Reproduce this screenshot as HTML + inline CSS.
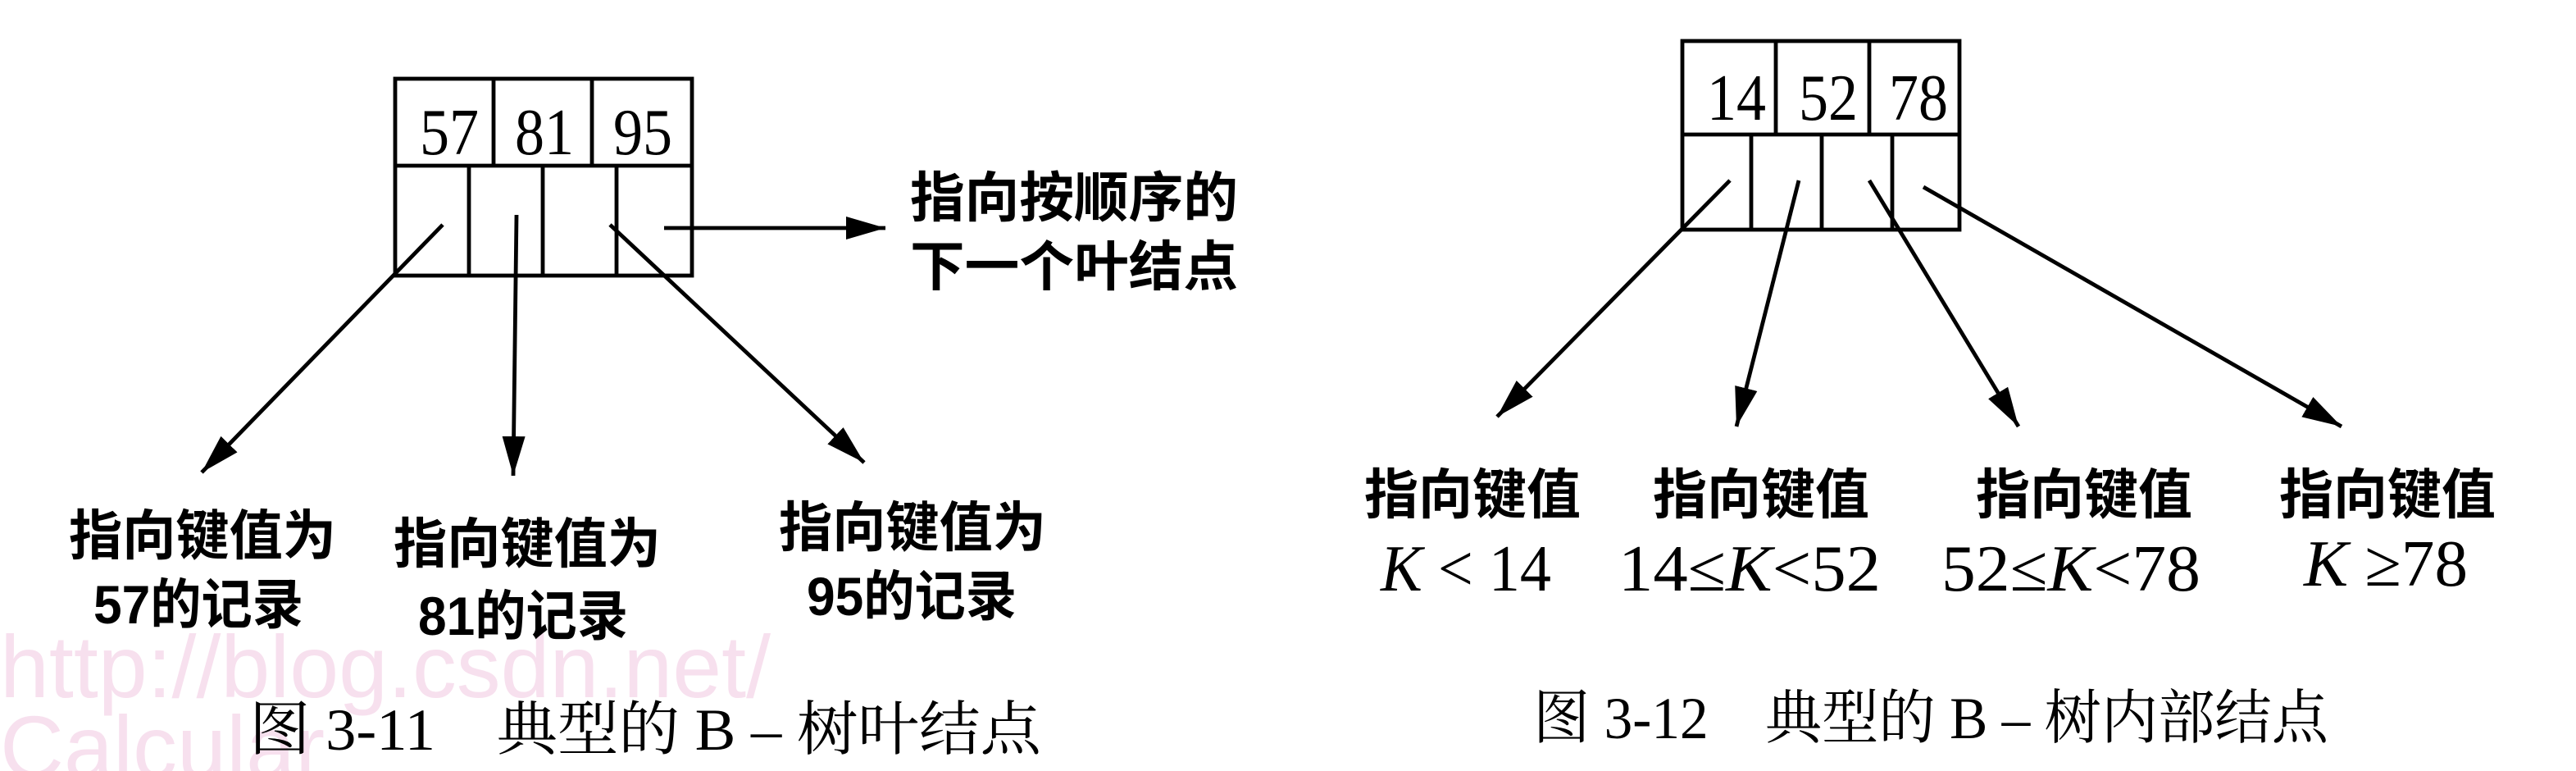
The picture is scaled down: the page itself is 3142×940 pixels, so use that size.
<!DOCTYPE html>
<html><head><meta charset="utf-8"><style>
html,body{margin:0;padding:0;background:#fff;}
svg{display:block;}
.n{font-family:"Liberation Serif",serif;font-size:40px;fill:#000;}
.c{font-family:"Liberation Sans","Noto Sans CJK SC",sans-serif;font-weight:bold;font-size:33px;fill:#000;}
.cap{font-family:"Liberation Serif","Noto Serif CJK SC","Noto Sans CJK SC",serif;font-size:36px;fill:#000;}
.wm{font-family:"Liberation Sans",sans-serif;font-size:54px;fill:#f7e0ee;}
</style></head><body>
<svg width="3142" height="940" viewBox="0 0 1571 470" xmlns="http://www.w3.org/2000/svg">
<defs>
<marker id="b" viewBox="0 0 24 14" refX="24" refY="7" markerWidth="24" markerHeight="14" orient="auto" markerUnits="userSpaceOnUse"><path d="M0,0 L24,7 L0,14 Z" fill="#000"/></marker></defs>
<text class="wm" x="0" y="425" textLength="470" lengthAdjust="spacingAndGlyphs">http://blog.csdn.net/</text>
<text class="wm" x="0" y="474">Calcular</text>
<g stroke="#000" stroke-width="2.4" fill="none">
<rect x="241" y="48" width="181" height="120"/>
<line x1="241" y1="101" x2="422" y2="101"/>
<line x1="301" y1="48" x2="301" y2="101"/><line x1="361" y1="48" x2="361" y2="101"/>
<line x1="286" y1="101" x2="286" y2="168"/><line x1="331" y1="101" x2="331" y2="168"/><line x1="376" y1="101" x2="376" y2="168"/>
<line x1="405" y1="139" x2="540" y2="139" marker-end="url(#b)"/>
<line x1="270" y1="137" x2="123" y2="288" marker-end="url(#b)"/>
<line x1="315" y1="131" x2="313" y2="290" marker-end="url(#b)"/>
<line x1="372" y1="137" x2="527" y2="282" marker-end="url(#b)"/>
<rect x="1026" y="25" width="169" height="115"/>
<line x1="1026" y1="82" x2="1195" y2="82"/>
<line x1="1083" y1="25" x2="1083" y2="82"/><line x1="1140" y1="25" x2="1140" y2="82"/>
<line x1="1068" y1="82" x2="1068" y2="140"/><line x1="1111" y1="82" x2="1111" y2="140"/><line x1="1154" y1="82" x2="1154" y2="140"/>
<line x1="1055" y1="110" x2="913" y2="254" marker-end="url(#b)"/>
<line x1="1097" y1="110" x2="1059" y2="260" marker-end="url(#b)"/>
<line x1="1140" y1="110" x2="1231" y2="260" marker-end="url(#b)"/>
<line x1="1173" y1="114" x2="1428" y2="260" marker-end="url(#b)"/>
</g>
<text class="n" x="256" y="94" textLength="36" lengthAdjust="spacingAndGlyphs">57</text>
<text class="n" x="314" y="94" textLength="36" lengthAdjust="spacingAndGlyphs">81</text>
<text class="n" x="374" y="94" textLength="36" lengthAdjust="spacingAndGlyphs">95</text>
<text class="n" x="1041" y="73" textLength="36" lengthAdjust="spacingAndGlyphs">14</text>
<text class="n" x="1097" y="73" textLength="36" lengthAdjust="spacingAndGlyphs">52</text>
<text class="n" x="1152" y="73" textLength="36" lengthAdjust="spacingAndGlyphs">78</text>
<text class="c" x="555" y="132" textLength="200" lengthAdjust="spacingAndGlyphs">指向按顺序的</text>
<text class="c" x="555" y="174" textLength="200" lengthAdjust="spacingAndGlyphs">下一个叶结点</text>
<text class="c" x="42" y="338" textLength="163" lengthAdjust="spacingAndGlyphs">指向键值为</text>
<text class="c" x="57" y="380" textLength="128" lengthAdjust="spacingAndGlyphs">57的记录</text>
<text class="c" x="240" y="343" textLength="163" lengthAdjust="spacingAndGlyphs">指向键值为</text>
<text class="c" x="255" y="387" textLength="128" lengthAdjust="spacingAndGlyphs">81的记录</text>
<text class="c" x="475" y="333" textLength="163" lengthAdjust="spacingAndGlyphs">指向键值为</text>
<text class="c" x="492" y="375" textLength="128" lengthAdjust="spacingAndGlyphs">95的记录</text>
<text class="c" x="832" y="313" textLength="132" lengthAdjust="spacingAndGlyphs">指向键值</text>
<text class="c" x="1008" y="313" textLength="132" lengthAdjust="spacingAndGlyphs">指向键值</text>
<text class="c" x="1205" y="313" textLength="132" lengthAdjust="spacingAndGlyphs">指向键值</text>
<text class="c" x="1390" y="313" textLength="132" lengthAdjust="spacingAndGlyphs">指向键值</text>
<text class="n" x="842" y="360" textLength="104" lengthAdjust="spacingAndGlyphs"><tspan font-style="italic">K</tspan> &lt; 14</text>
<text class="n" x="987" y="360" textLength="160" lengthAdjust="spacingAndGlyphs">14≤<tspan font-style="italic">K</tspan>&lt;52</text>
<text class="n" x="1184" y="360" textLength="158" lengthAdjust="spacingAndGlyphs">52≤<tspan font-style="italic">K</tspan>&lt;78</text>
<text class="n" x="1405" y="357" textLength="100" lengthAdjust="spacingAndGlyphs"><tspan font-style="italic">K</tspan> ≥78</text>
<text class="cap" x="152" y="457" textLength="483" lengthAdjust="spacingAndGlyphs">图 3-11　典型的 B – 树叶结点</text>
<text class="cap" x="935" y="450" textLength="485" lengthAdjust="spacingAndGlyphs">图 3-12　典型的 B – 树内部结点</text>
</svg>
</body></html>
